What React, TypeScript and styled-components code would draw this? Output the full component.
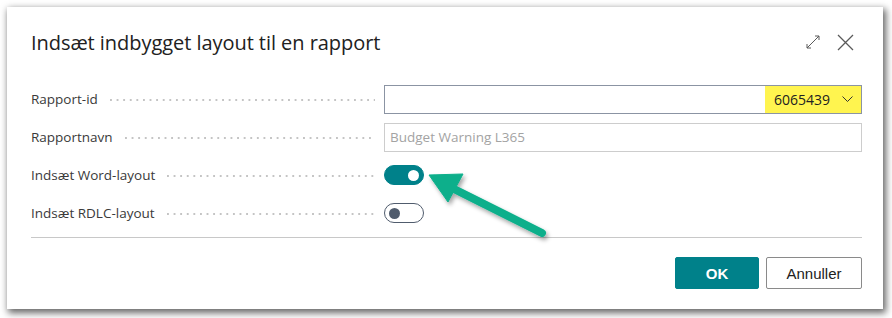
import styled, { createGlobalStyle } from 'styled-components';

const GlobalStyle = createGlobalStyle`
  html, body {
    margin: 0;
    padding: 0;
    background: #ffffff;
  }
  * {
    box-sizing: border-box;
  }
`;

const teal = '#00818a';
const font = `'Open Sans', 'Noto Sans', 'Liberation Sans', sans-serif`;

const Frame = styled.div`
  width: 892px;
  height: 318px;
  padding: 7px 9px 9px 7px;
  background: #ffffff;
`;

const Dialog = styled.div`
  position: relative;
  width: 876px;
  height: 302px;
  background: #ffffff;
  box-shadow: 2px 3px 7px 1px rgba(0, 0, 0, 0.6);
  font-family: ${font};
  color: #333333;
  padding: 0 21px 0 24px;
  display: flex;
  flex-direction: column;
`;

const Header = styled.div`
  height: 73px;
  display: flex;
  align-items: center;
  justify-content: space-between;
  padding-bottom: 3px;
`;

const Title = styled.h1`
  margin: 0;
  font-size: 20px;
  font-weight: 400;
  color: #212121;
  letter-spacing: -0.05px;
`;

const HeaderActions = styled.div`
  display: flex;
  align-items: center;
  gap: 16px;
  margin-right: 8px;
  color: #5a5a5a;
`;

const Form = styled.div`
  display: grid;
  grid-template-columns: 353px 1fr;
  grid-auto-rows: 38px;
  align-items: center;
`;

const Label = styled.div`
  display: flex;
  align-items: center;
  gap: 12px;
  padding-right: 9px;
  font-size: 13.5px;
  color: #3a3a3a;
  white-space: nowrap;
`;

const Leader = styled.span`
  flex: 1;
  height: 2px;
  margin-top: 2px;
  background-image: linear-gradient(to right, #c4c4c4 0 1.5px, transparent 1.5px);
  background-size: 6.6px 2px;
  background-repeat: repeat-x;
`;

const Input = styled.div<{ $disabled?: boolean }>`
  height: 29px;
  border: 1px solid ${(p) => (p.$disabled ? '#cdcdcd' : '#8b94a3')};
  display: flex;
  align-items: center;
  justify-content: space-between;
  padding-left: 5px;
  font-size: 13.5px;
  color: ${(p) => (p.$disabled ? '#a3a3a3' : '#212121')};
`;

const Highlight = styled.div`
  height: 100%;
  width: 96px;
  background: #fff44f;
  display: flex;
  align-items: center;
  justify-content: flex-end;
  gap: 12px;
  padding-right: 8px;
  color: #212121;
  font-size: 14px;
`;

const Toggle = styled.div<{ $on?: boolean }>`
  width: 40px;
  height: 20px;
  border-radius: 10px;
  border: 1px solid ${(p) => (p.$on ? teal : '#505c6d')};
  background: ${(p) => (p.$on ? teal : '#ffffff')};
  display: flex;
  align-items: center;
  justify-content: ${(p) => (p.$on ? 'flex-end' : 'flex-start')};
  padding: 0 4px;
`;

const Knob = styled.span<{ $on?: boolean }>`
  width: 11px;
  height: 11px;
  border-radius: 50%;
  background: ${(p) => (p.$on ? '#ffffff' : '#505c6d')};
`;

const Divider = styled.div`
  margin-top: 5px;
  height: 1px;
  background: #c8c8c8;
`;

const Footer = styled.div`
  display: flex;
  justify-content: flex-end;
  gap: 7px;
  margin-top: 19px;
`;

const Button = styled.button<{ $primary?: boolean }>`
  height: 32px;
  width: ${(p) => (p.$primary ? '84px' : '96px')};
  font-family: 'Liberation Sans', Arial, sans-serif;
  font-size: 15px;
  font-weight: ${(p) => (p.$primary ? 700 : 400)};
  border-radius: 2px;
  border: 1px solid ${(p) => (p.$primary ? teal : '#8a8a8a')};
  background: ${(p) => (p.$primary ? teal : '#ffffff')};
  color: ${(p) => (p.$primary ? '#ffffff' : '#212121')};
  cursor: pointer;
`;

const ArrowLayer = styled.svg`
  position: absolute;
  left: -7px;
  top: -7px;
  pointer-events: none;
  overflow: visible;
`;

const ExpandIcon = () => (
  <svg width="16" height="16" viewBox="0 0 16 16" fill="none" stroke="currentColor" strokeWidth="1">
    <path d="M2 14L14 2M10 2h4v4M2 10v4h4" />
  </svg>
);

const CloseIcon = () => (
  <svg width="17" height="17" viewBox="0 0 17 17" fill="none" stroke="currentColor" strokeWidth="1.3">
    <path d="M1 1L16 16M16 1L1 16" />
  </svg>
);

const ChevronDown = () => (
  <svg width="11" height="7" viewBox="0 0 11 7" fill="none" stroke="#333" strokeWidth="1">
    <path d="M0.5 0.5L5.5 5.5L10.5 0.5" />
  </svg>
);

const labels = ['Rapport-id', 'Rapportnavn', 'Indsæt Word-layout', 'Indsæt RDLC-layout'];

export default function App() {
  return (
    <>
      <GlobalStyle />
      <Frame>
        <Dialog>
          <Header>
            <Title>Indsæt indbygget layout til en rapport</Title>
            <HeaderActions>
              <ExpandIcon />
              <CloseIcon />
            </HeaderActions>
          </Header>
          <Form>
            <Label>
              {labels[0]}
              <Leader />
            </Label>
            <Input>
              <span />
              <Highlight>
                6065439
                <ChevronDown />
              </Highlight>
            </Input>
            <Label>
              {labels[1]}
              <Leader />
            </Label>
            <Input $disabled>Budget Warning L365</Input>
            <Label>
              {labels[2]}
              <Leader />
            </Label>
            <div>
              <Toggle $on>
                <Knob $on />
              </Toggle>
            </div>
            <Label>
              {labels[3]}
              <Leader />
            </Label>
            <div>
              <Toggle>
                <Knob />
              </Toggle>
            </div>
          </Form>
          <Divider />
          <Footer>
            <Button $primary>OK</Button>
            <Button>Annuller</Button>
          </Footer>
          <ArrowLayer width="892" height="318" viewBox="0 0 892 318">
            <defs>
              <filter id="arrowShadow" x="-20%" y="-20%" width="140%" height="140%">
                <feDropShadow dx="2" dy="3" stdDeviation="2" floodColor="#000" floodOpacity="0.35" />
              </filter>
            </defs>
            <g filter="url(#arrowShadow)" fill="#0aaf8b" stroke="#0aaf8b">
              <line x1="452" y1="188" x2="542" y2="233" strokeWidth="8" strokeLinecap="round" />
              <polygon points="429,175 463,174 448,202" strokeWidth="1" strokeLinejoin="round" />
            </g>
          </ArrowLayer>
        </Dialog>
      </Frame>
    </>
  );
}
